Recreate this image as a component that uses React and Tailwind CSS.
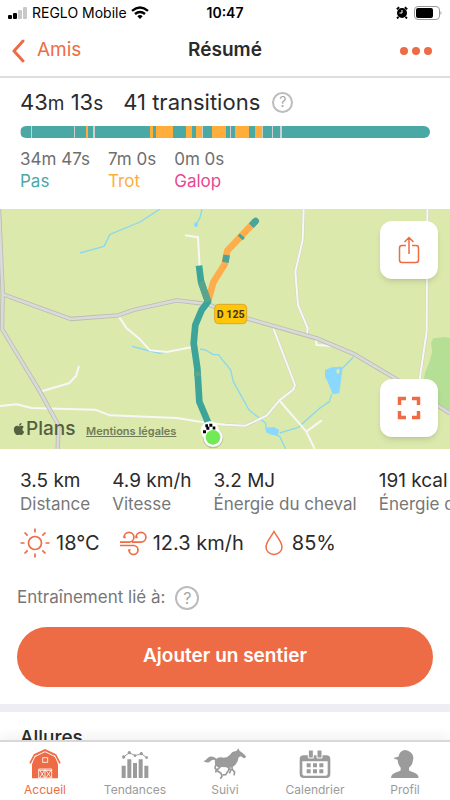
import { FaApple } from "react-icons/fa";

const TEAL = "#4aa8a5";
const ORANGE = "#ffad3b";
const GREY = "#cfcfcf";

// [colour, length]
const gaits = [
  [GREY, 3], [TEAL, 31], [GREY, 2], [TEAL, 126], [GREY, 2], [TEAL, 35], [ORANGE, 6], [TEAL, 14],
  [GREY, 5], [TEAL, 165], [ORANGE, 10], [TEAL, 10], [ORANGE, 49], [TEAL, 41], [ORANGE, 18],
  [TEAL, 10], [ORANGE, 18], [GREY, 4], [TEAL, 27], [ORANGE, 43], [TEAL, 11], [GREY, 4],
  [TEAL, 12], [ORANGE, 40], [TEAL, 18], [ORANGE, 22], [GREY, 4], [TEAL, 25], [GREY, 5],
  [TEAL, 19], [GREY, 6], [TEAL, 303], [GREY, 2], [TEAL, 140],
];

const totals = [
  { time: "34m 47s", name: "Pas", color: "text-[#4aa8a5]" },
  { time: "7m 0s", name: "Trot", color: "text-[#ffad3b]" },
  { time: "0m 0s", name: "Galop", color: "text-[#e8488f]" },
];

const stats = [
  { value: "3.5 km", label: "Distance" },
  { value: "4.9 km/h", label: "Vitesse" },
  { value: "3.2 MJ", label: "Énergie du cheval" },
  { value: "191 kcal", label: "Énergie du cavalier" },
];

const tabs = [
  { name: "Accueil", icon: <BarnIcon />, active: true },
  { name: "Tendances", icon: <TrendsIcon /> },
  { name: "Suivi", icon: <HorseIcon /> },
  { name: "Calendrier", icon: <CalendarIcon /> },
  { name: "Profil", icon: <RiderIcon /> },
];

export default function App() {
  return (
    <div className="flex h-screen flex-col overflow-hidden bg-white font-['Inter','Liberation_Sans',sans-serif] text-[#2b2b2b]">
      <StatusBar />

      <header className="grid h-[53px] shrink-0 grid-cols-3 items-center border-b-2 border-[#dedede] px-3 text-[19px]">
        <button className="flex items-center gap-3 text-[#ee6c45]">
          <svg width="13" height="24" viewBox="0 0 13 24" fill="none" stroke="currentColor" strokeWidth="3" strokeLinecap="round" strokeLinejoin="round">
            <path d="M11 2 2 12l9 10" />
          </svg>
          Amis
        </button>
        <h1 className="text-center font-semibold">Résumé</h1>
        <button aria-label="Options" className="mr-1.5 flex gap-1 justify-self-end">
          <span className="size-2 rounded-full bg-[#ee6c45]" />
          <span className="size-2 rounded-full bg-[#ee6c45]" />
          <span className="size-2 rounded-full bg-[#ee6c45]" />
        </button>
      </header>

      <main className="min-h-0 flex-1 overflow-hidden">
        <section className="px-5 pt-3">
          <div className="flex h-6 items-center whitespace-nowrap text-[22px]">
            <p>43<small className="text-[19px]">m</small> 13<small className="text-[19px]">s</small></p>
            <p className="ml-5">41 transitions</p>
            <HelpButton className="ml-3 size-[21px] text-sm" />
          </div>

          <div className="mt-3 flex h-3 overflow-hidden rounded-full">
            {gaits.map(([color, length], i) => (
              <span key={i} style={{ flexGrow: length, backgroundColor: color }} />
            ))}
          </div>

          <div className="mt-2.5 flex gap-[18px] text-[17px] leading-[22px]">
            {totals.map((t) => (
              <div key={t.name}>
                <p className="text-[#6f6f6f]">{t.time}</p>
                <p className={t.color}>{t.name}</p>
              </div>
            ))}
          </div>
        </section>

        <section className="relative mt-[17px] h-60 bg-[#dbe9ad]">
          <TrailMap />
          <p className="absolute bottom-1.5 left-3 flex items-center text-[19px] leading-7 font-medium text-[#55603f]">
            <FaApple className="size-[14px]" />Plans
          </p>
          <a href="#mentions" className="absolute bottom-2.5 left-[86px] text-[11px] font-semibold text-[#717b56] underline">
            Mentions légales
          </a>
          <button aria-label="Partager" className="absolute top-3 right-3 flex size-[58px] items-center justify-center rounded-xl bg-white shadow-md">
            <svg width="22" height="28" viewBox="0 0 22 28" fill="none" stroke="#ee6c45" strokeWidth="1.500">
              <path d="M8 9.500H4q-2.500 0-2.500 2.500v12q0 2.500 2.500 2.500h14q2.500 0 2.500-2.500v-12q0-2.500-2.500-2.500h-4M11 18V2M6.500 6 11 1.500 15.500 6" />
            </svg>
          </button>
          <button aria-label="Plein écran" className="absolute right-3 bottom-3 flex size-[58px] items-center justify-center rounded-xl bg-white shadow-md">
            <svg width="24" height="24" viewBox="0 0 24 24" fill="none" stroke="#ee6c45" strokeWidth="3.500">
              <path d="M2.500 9V2.500H9M15 2.500h6.500V9M21.500 15v6.500H15M9 21.500H2.500V15" />
            </svg>
          </button>
        </section>

        <section className="overflow-hidden px-5 pt-5">
          <div className="flex gap-[22px] whitespace-nowrap">
            {stats.map((s) => (
              <div key={s.value}>
                <p className="text-[19px] leading-6">{s.value}</p>
                <p className="text-[17px] leading-[22px] text-[#777]">{s.label}</p>
              </div>
            ))}
          </div>
          <div className="mt-3 flex h-8 items-center gap-5 text-xl">
            <p className="flex items-center gap-1.5"><SunIcon />18°C</p>
            <p className="flex items-center gap-1.5"><WindIcon />12.3 km/h</p>
            <p className="flex items-center gap-2"><DropIcon />85%</p>
          </div>
        </section>

        <section className="px-[17px] pt-[26px]">
          <div className="flex items-center gap-2.5 text-[17px] text-[#777]">
            Entraînement lié à:
            <HelpButton className="size-6 text-base" />
          </div>
          <button className="mt-4 h-[60px] w-full rounded-full bg-[#ee6c45] text-[19px] font-semibold text-white">
            Ajouter un sentier
          </button>
        </section>

        <section className="mt-[17px] border-t-8 border-[#ededf3] px-5 pt-3">
          <h2 className="text-[19px] font-medium">Allures</h2>
        </section>
      </main>

      <nav className="relative grid h-[60px] shrink-0 grid-cols-5 border-t-2 border-[#d8d8d8] bg-white shadow-[0_-4px_12px_rgba(0,0,0,0.06)]">
        {tabs.map((t) => (
          <button key={t.name} className={`flex flex-col items-center pt-1.5 text-xs ${t.active ? "text-[#ee6c45]" : "text-[#9b9b9b]"}`}>
            <span className="flex h-8 items-center">{t.icon}</span>
            <span className="mt-0.5">{t.name}</span>
          </button>
        ))}
      </nav>
    </div>
  );
}

function StatusBar() {
  return (
    <div className="grid h-[25px] shrink-0 grid-cols-3 items-center px-2 text-sm whitespace-nowrap text-black">
      <div className="flex items-center gap-1">
        <svg width="20" height="12" viewBox="0 0 20 12">
          <rect y="8" width="4" height="4" rx="1" />
          <rect x="5" y="6" width="4" height="6" rx="1" />
          <rect x="10" y="3" width="4" height="9" rx="1" fill="#c8c8c8" />
          <rect x="15" width="4" height="12" rx="1" fill="#c8c8c8" />
        </svg>
        REGLO Mobile
        <svg width="18" height="13" viewBox="0 0 18 13" fill="none" stroke="black" strokeWidth="2.400">
          <path d="M1 4.800Q9-2 17 4.800M4 8q5-4 10 0" />
          <path d="M9 13 6.300 10.200Q9 8 11.700 10.200Z" fill="black" stroke="none" />
        </svg>
      </div>
      <p className="text-center font-semibold">10:47</p>
      <div className="flex items-center justify-end gap-1.5">
        <svg width="12" height="13" viewBox="0 0 12 13">
          <circle cx="6" cy="7" r="5" />
          <path d="m.8 3.300 2.400-2M11.200 3.300l-2.400-2M2.500 11 1 12.500M9.500 11l1.500 1.500" stroke="black" strokeWidth="1.800" />
          <path d="M6 4v3H3.500" fill="none" stroke="white" />
        </svg>
        <svg width="28" height="14" viewBox="0 0 28 14">
          <rect x=".5" y=".5" width="25" height="13" rx="3.500" fill="none" stroke="#999" />
          <rect x="2" y="2" width="17" height="10" rx="2" />
          <path d="M26.500 5q2 2 0 4Z" fill="#999" />
        </svg>
      </div>
    </div>
  );
}

function HelpButton({ className }) {
  return (
    <button aria-label="Aide" className={`flex items-center justify-center rounded-full border-2 border-[#bcbcbc] text-[#a6a6a6] ${className}`}>
      ?
    </button>
  );
}

function TrailMap() {
  return (
    <svg className="size-full" viewBox="0 12 1350 720" preserveAspectRatio="xMidYMid slice" fill="none" strokeLinejoin="round">
      <path d="M1350 400 1335 396 1300 400 1293 415 1297 440 1287 475 1276 500 1270 530 1290 585 1350 616Z" fill="#b5df95" />

      {/* water */}
      <g stroke="#8bd8ee" strokeWidth="4">
        <path d="M240 144 312 124 330 88 420 51 480 12M606 12 600 38 588 60M396 424 450 438 480 445 500 440M600 432 617 435 640 449 655 449 675 474 692 495 700 530 725 575 747 615 775 637 797 655 800 680 839 694 857 732" />
        <path d="M1060 457 1025 492M995 568 988 590 960 609 920 644 895 667 839 684" />
      </g>
      <path d="m975 495 20-8 30-2 2 10-9 70-20 3-15-38-8-14Z M797 668l25-2 15 8-3 17-20-2-16-8Z" fill="#8bd8ff" />
      <ellipse cx="1014" cy="499" rx="5" ry="8" fill="#dbe9ad" />
      <ellipse cx="588" cy="59" rx="6" ry="7" fill="#8bd8ff" />

      {/* side roads */}
      <g stroke="#cfd3bd" strokeWidth="9">
        <path d="M911 12 908 105 886 200 894 300 923 370 920 395M1282 12 1280 380 1258 530M820 370 885 540 880 554 838 586 800 632 737 662 675 659" />
      </g>
      <g stroke="#f8f7f8" strokeWidth="6">
        <path d="M911 12 908 105 886 200 894 300 923 370 920 395M1282 12 1280 380 1258 530M820 370 885 540 880 554 838 586 800 632 737 662 675 659" />
        <path d="M838 586 919 680 944 732M919 680 965 646M949 403v17l49 3M555 91l39 6 5 88M355 332 380 370 420 403 450 436 500 441 582 425M120 560 207 535 228 513 237 482M0 603 50 598 95 609 285 614 330 631 530 639 610 652 675 659" />
      </g>

      {/* main roads */}
      <g stroke="#b9bcb2" strokeWidth="13">
        <path d="M-3 12 8 260 6 372 120 560 175 660 173 740M8 268 212 342 355 331 400 315 530 286 620 297 740 340 950 400 1060 446 1185 520 1350 625" />
      </g>
      <g stroke="#dadadb" strokeWidth="8">
        <path d="M-3 12 8 260 6 372 120 560 175 660 173 740M8 268 212 342 355 331 400 315 530 286 620 297 740 340 950 400 1060 446 1185 520 1350 625" />
      </g>

      {/* ride */}
      <g strokeWidth="20">
        <path d="M765 49 682 137 674 178 640 232 624 290" stroke="#ffad4b" />
        <path d="M597 182 603 230 624 290 605 315 586 360 581 415 592 490 598 590 624 652" stroke="#3da49a" />
        <path d="m603 230 21 60" stroke="#58a58d" />
        <path d="m767 48-1 1" stroke="#4aa49a" strokeLinecap="round" />
        <path d="m767 48-13 14M680 150l-4 22M727 92l-6 7" stroke="#4aa49a" />
        <path d="m592 500 1 14" stroke="#62a487" />
      </g>

      {/* road sign */}
      <rect x="644" y="298" width="96" height="58" rx="12" fill="#ffc60b" stroke="#dda528" strokeWidth="3" />
      <text x="692" y="339" textAnchor="middle" fill="#40351d" fontFamily="Roboto, sans-serif" fontSize="32" fontWeight="700">D 125</text>

      {/* finish and start */}
      <circle cx="639" cy="699" r="31" fill="#b7c493" />
      <circle cx="629" cy="676" r="27" fill="white" />
      <circle cx="639" cy="697" r="29" fill="white" />
      <path d="M609 680h9M619 670h9M628 661h9M638 669h8M616 662h8" stroke="black" strokeWidth="9" />
      <circle cx="639" cy="697" r="22" fill="#70ea55" />
    </svg>
  );
}

function SunIcon() {
  return (
    <svg width="30" height="30" viewBox="0 0 30 30" fill="none" stroke="#ee6c45" strokeWidth="1.700">
      <circle cx="15" cy="15" r="6.500" />
      <path d="M15 .5v4M15 25.500v4M.5 15h4M25.500 15h4M4.500 4.500l3.200 3.200M22.300 22.300l3.200 3.200M25.500 4.500l-3.200 3.200M7.700 22.300l-3.200 3.200" />
    </svg>
  );
}

function WindIcon() {
  return (
    <svg width="27" height="25" viewBox="0 0 27 25" fill="none" stroke="#ee6c45" strokeWidth="1.700">
      <path d="M0 11.200h9a4.900 4.900 0 1 0-4.900-4.900M12 11.200h9a4.900 4.900 0 1 0-4.900-4.900M0 14.500h13.500a4.500 4.500 0 1 1-4.500 4.500" />
      <path d="M3.300 6.300h2.400M15.300 6.300h2.400M8.200 19h2.400" />
    </svg>
  );
}

function DropIcon() {
  return (
    <svg width="20" height="26" viewBox="0 0 20 26" fill="none" stroke="#ee6c45" strokeWidth="1.500">
      <path d="M10 1.500C7 7 2 12 2 17a8 7.500 0 0 0 16 0C18 12 13 7 10 1.500Z" />
    </svg>
  );
}

function BarnIcon() {
  return (
    <svg width="32" height="30" viewBox="0 0 96 90">
      <path d="M48 5 72 16 81 30 87 46V88H9V46l6-16 9-14Z" fill="currentColor" />
      <path d="M3 49 17 23 48 8 79 23 93 49" fill="none" stroke="white" strokeWidth="3" />
      <path d="M3 43 16 18 48 3 80 18 93 43" fill="none" stroke="currentColor" strokeWidth="5" />
      <path d="M41 26h15v14H41ZM29 87V60h39v27ZM29 64h39M48 60v27M32 64l15 22M47 64 32 86M51 64l15 22M66 64 51 86" fill="none" stroke="white" strokeWidth="2.500" />
    </svg>
  );
}

function TrendsIcon() {
  return (
    <svg width="28" height="30" viewBox="0 0 84 90" fill="currentColor">
      <path d="M2 50h12v37H2ZM19 31h12v56H19ZM36 42h12v45H36ZM53 31h12v56H53ZM70 50h12v37H70Z" />
      <path d="M8 24 25 11 42 20 61 14 77 26" fill="none" stroke="currentColor" strokeWidth="3" />
      <circle cx="8" cy="24" r="5" />
      <circle cx="25" cy="11" r="5" />
      <circle cx="42" cy="20" r="4" />
      <circle cx="61" cy="14" r="5" />
      <circle cx="77" cy="26" r="4" />
    </svg>
  );
}

function HorseIcon() {
  return (
    <svg width="44" height="32" viewBox="40 22 132 96" fill="currentColor">
      <path d="M41 62Q49 59 54 52 62 45 73 49L80 54Q90 47 103 51 113 51 121 42L128 34 141 30 146 23 150 31 159 37 169 47 167 52 161 52 154 47 147 50Q145 66 134 75 124 84 110 80L97 79Q88 84 80 76 74 70 76 58 69 55 64 60 56 68 49 65Z" />
      <path d="M79 70 76 82 84 91 94 98 97 107 92 114" fill="none" stroke="currentColor" strokeWidth="5" />
      <path d="M90 75 88 83 80 88 78 96M120 77 116 90 108 102 98 103M126 73 128 87 135 94 133 104M112 77 124 88 119 98" fill="none" stroke="currentColor" strokeWidth="5" />
    </svg>
  );
}

function CalendarIcon() {
  return (
    <svg width="32" height="30" viewBox="0 0 96 90" fill="currentColor">
      <path fillRule="evenodd" d="M14 19h68q12 0 12 12v44q0 12-12 12H14Q2 87 2 75V31q0-12 12-12Zm-4 18v37q0 6 6 6h64q6 0 6-6V37Z" />
      <path d="M28 3h15v24H28ZM54 3h15v24H54Z" stroke="white" strokeWidth="3" />
      <path d="M23 43h12v12H23ZM42 43h12v12H42ZM61 43h12v12H61ZM23 61h12v12H23ZM42 61h12v12H42ZM61 61h12v12H61Z" />
    </svg>
  );
}

function RiderIcon() {
  return (
    <svg width="30" height="30" viewBox="0 0 90 90" fill="currentColor">
      <path d="M42 4q0-3 5 0c15 2 24 13 23 25l-2 9q-1 12-11 18v8c5 7 28 5 29 23H3c1-18 24-16 29-23v-8q-8-6-9-24l-10-3-1-3 13-3C28 12 33 6 42 4Z" />
    </svg>
  );
}
